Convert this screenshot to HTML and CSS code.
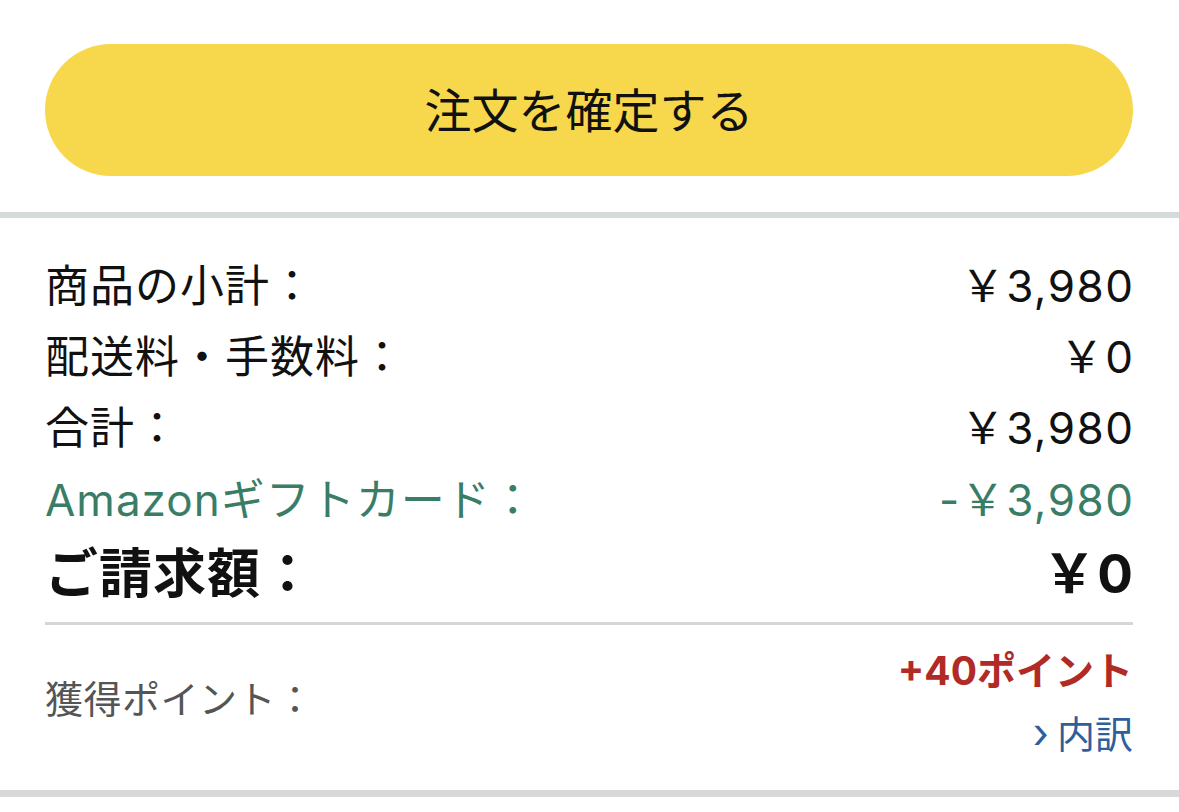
FILE: index.html
```html
<!DOCTYPE html>
<html lang="ja">
<head>
<meta charset="utf-8">
<link rel="stylesheet" href="styles.css">
</head>
<body>
<div class="top">
  <button class="place-order">注文を確定する</button>
</div>
<div class="band"></div>
<div class="summary">
  <div class="row"><span>商品の小計：</span><span>￥3,980</span></div>
  <div class="row"><span>配送料・手数料：</span><span>￥0</span></div>
  <div class="row"><span>合計：</span><span>￥3,980</span></div>
  <div class="row green"><span>Amazonギフトカード：</span><span>-￥3,980</span></div>
  <div class="row total"><span>ご請求額：</span><span>￥0</span></div>
  <div class="divider"></div>
  <div class="points">
    <span class="points-label">獲得ポイント：</span>
    <div class="points-right">
      <span class="points-value">+40ポイント</span>
      <span class="points-link"><span class="chevron">›</span>内訳</span>
    </div>
  </div>
</div>
<div class="band bottom"></div>
</body>
</html>
```
FILE: styles.css
```css
html, body {
  margin: 0;
  padding: 0;
  background: #ffffff;
}
body {
  font-family: "Inter", "Noto Sans CJK JP", "Noto Sans", sans-serif;
  color: #111111;
  width: 1179px;
}
.top {
  padding: 44px 46px 36px 45px;
}
.place-order {
  display: flex;
  align-items: center;
  justify-content: center;
  width: 100%;
  height: 132px;
  border: none;
  border-radius: 66px;
  background: #F7D84C;
  color: #111111;
  font-family: "Noto Sans CJK JP", sans-serif;
  font-size: 47px;
  font-weight: 400;
  padding: 0 0 6px 0;
}
.band {
  height: 6px;
  background: #D5DBDB;
}
.summary {
  padding: 33px 46px 25px 45px;
}
.row {
  display: flex;
  justify-content: space-between;
  align-items: center;
  height: 71px;
  font-size: 44px;
  line-height: 71px;
  letter-spacing: 1px;
}
.row span:last-child {
  letter-spacing: 1.5px;
  margin-right: -1.5px;
}
.row.green {
  color: #3A7D66;
  margin-top: 1px;
}
.row.total {
  font-size: 53px;
  font-weight: 700;
  margin-top: 3px;
}
.divider {
  height: 3px;
  background: #D6D6D6;
  margin-top: 12px;
}
.points {
  display: flex;
  justify-content: space-between;
  align-items: center;
  padding-top: 15px;
}
.points-label {
  font-size: 38px;
  color: #555555;
  letter-spacing: 0.5px;
  margin-bottom: 12px;
}
.points-right {
  display: flex;
  flex-direction: column;
  align-items: flex-end;
}
.points-value {
  font-size: 39px;
  line-height: 62px;
  font-weight: 700;
  color: #B12A26;
}
.points-link {
  font-size: 38px;
  line-height: 62px;
  color: #2F5F9B;
}
.chevron {
  font-size: 42px;
  margin-right: 8px;
}
.band.bottom {
  height: 7px;
  background: #D8D8D8;
}
```
